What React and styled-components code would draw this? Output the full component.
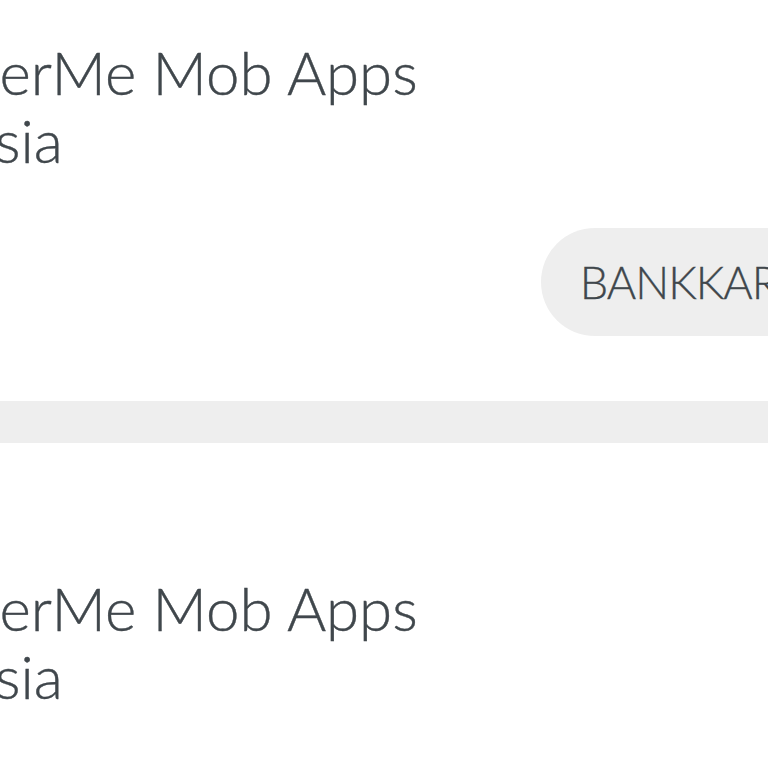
import React from 'react';
import styled, { createGlobalStyle } from 'styled-components';

const Global = createGlobalStyle`
  html, body {
    margin: 0;
    padding: 0;
    background: #fff;
  }
  body {
    font-family: "Lato", "Open Sans", sans-serif;
    color: #40474c;
  }
`;

const Viewport = styled.div`
  width: 768px;
  height: 768px;
  overflow: hidden;
  background: #fff;
`;

const Screen = styled.div`
  width: 1020px;
  margin-left: -112px;
`;

const Card = styled.section`
  padding: ${p => p.$top}px 0 0 0;
`;

const Merchant = styled.h2`
  margin: 0;
  width: 560px;
  font-size: 60px;
  font-weight: 300;
  line-height: 68px;
  color: #40474c;
  -webkit-text-stroke: 0.4px #40474c;
`;

const Actions = styled.div`
  display: flex;
  justify-content: flex-end;
  margin-top: 54px;
  padding-right: 42px;
`;

const Pill = styled.button`
  height: 108px;
  padding: 0 39px;
  border: none;
  border-radius: 54px;
  background: #eeeeee;
  font-family: "Lato", "Open Sans", sans-serif;
  font-size: 45px;
  font-weight: 300;
  color: #40474c;
  letter-spacing: -1px;
  -webkit-text-stroke: 0.3px #40474c;
`;

const Band = styled.div`
  height: 42px;
  margin-top: 65px;
  background: #eeeeee;
`;

export default function App() {
  return (
    <Viewport>
      <Global />
      <Screen>
        <Card $top={38}>
          <Merchant>PowerMe Mob Apps Tunisia</Merchant>
          <Actions>
            <Pill>BANKKARTE</Pill>
          </Actions>
        </Card>
        <Band />
        <Card $top={131}>
          <Merchant>PowerMe Mob Apps Tunisia</Merchant>
        </Card>
      </Screen>
    </Viewport>
  );
}
